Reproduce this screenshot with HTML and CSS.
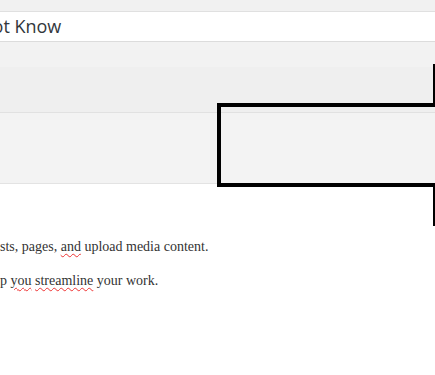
FILE: index.html
```html
<!DOCTYPE html>
<html>
<head>
<meta charset="utf-8">
<link rel="stylesheet" href="styles.css">
</head>
<body>
<div class="page">
  <div class="top">
    <div class="title-input"><span class="title-text">Not Know</span></div>
    <div class="band1"></div>
    <div class="band2"></div>
    <div class="box"></div>
  </div>
  <div class="content">
    <p class="para">sts, pages, <span class="spell">and</span> upload media content.</p>
    <p class="para">p <span class="spell">you</span> <span class="spell">streamline</span> your work.</p>
  </div>
  <svg class="annot" width="435" height="375" viewBox="0 0 435 375">
    <rect x="433" y="64" width="2" height="41" fill="#000"/>
    <rect x="217" y="103" width="218" height="4" fill="#000"/>
    <rect x="217" y="103" width="4" height="84" fill="#000"/>
    <rect x="217" y="183" width="218" height="4" fill="#000"/>
    <rect x="433" y="186" width="2" height="40" fill="#000"/>
  </svg>
</div>
</body>
</html>
```
FILE: styles.css
```css
html, body {
  margin: 0;
  padding: 0;
  background: #fff;
  overflow: hidden;
}
.page {
  position: relative;
  width: 435px;
  height: 375px;
  overflow: hidden;
}
.top {
  background: #f1f1f1;
  padding-top: 11px;
}
.title-input {
  background: #fff;
  border-top: 1px solid #e0e0e0;
  border-bottom: 1px solid #dcdcdc;
  height: 29px;
  overflow: hidden;
  white-space: nowrap;
}
.title-text {
  display: block;
  margin-left: -21px;
  font-family: "Open Sans", sans-serif;
  font-size: 18px;
  line-height: 29px;
  color: #32373c;
}
.band1 {
  height: 25px;
  background: #f2f2f2;
}
.band2 {
  height: 45px;
  background: #efefef;
  border-bottom: 1px solid #e1e1e1;
}
.box {
  height: 70px;
  background: #f3f3f3;
  border-bottom: 1px solid #e3e3e3;
}
.content {
  padding-top: 52px;
  font-family: "Liberation Serif", serif;
  font-size: 14px;
  color: #333;
}
.para {
  margin: 0 0 13px 0;
  line-height: 21px;
  white-space: nowrap;
}
.spell {
  text-decoration: underline wavy #e33;
  text-decoration-thickness: 1px;
  text-underline-offset: 2px;
}
.annot {
  position: absolute;
  left: 0;
  top: 0;
}
```
